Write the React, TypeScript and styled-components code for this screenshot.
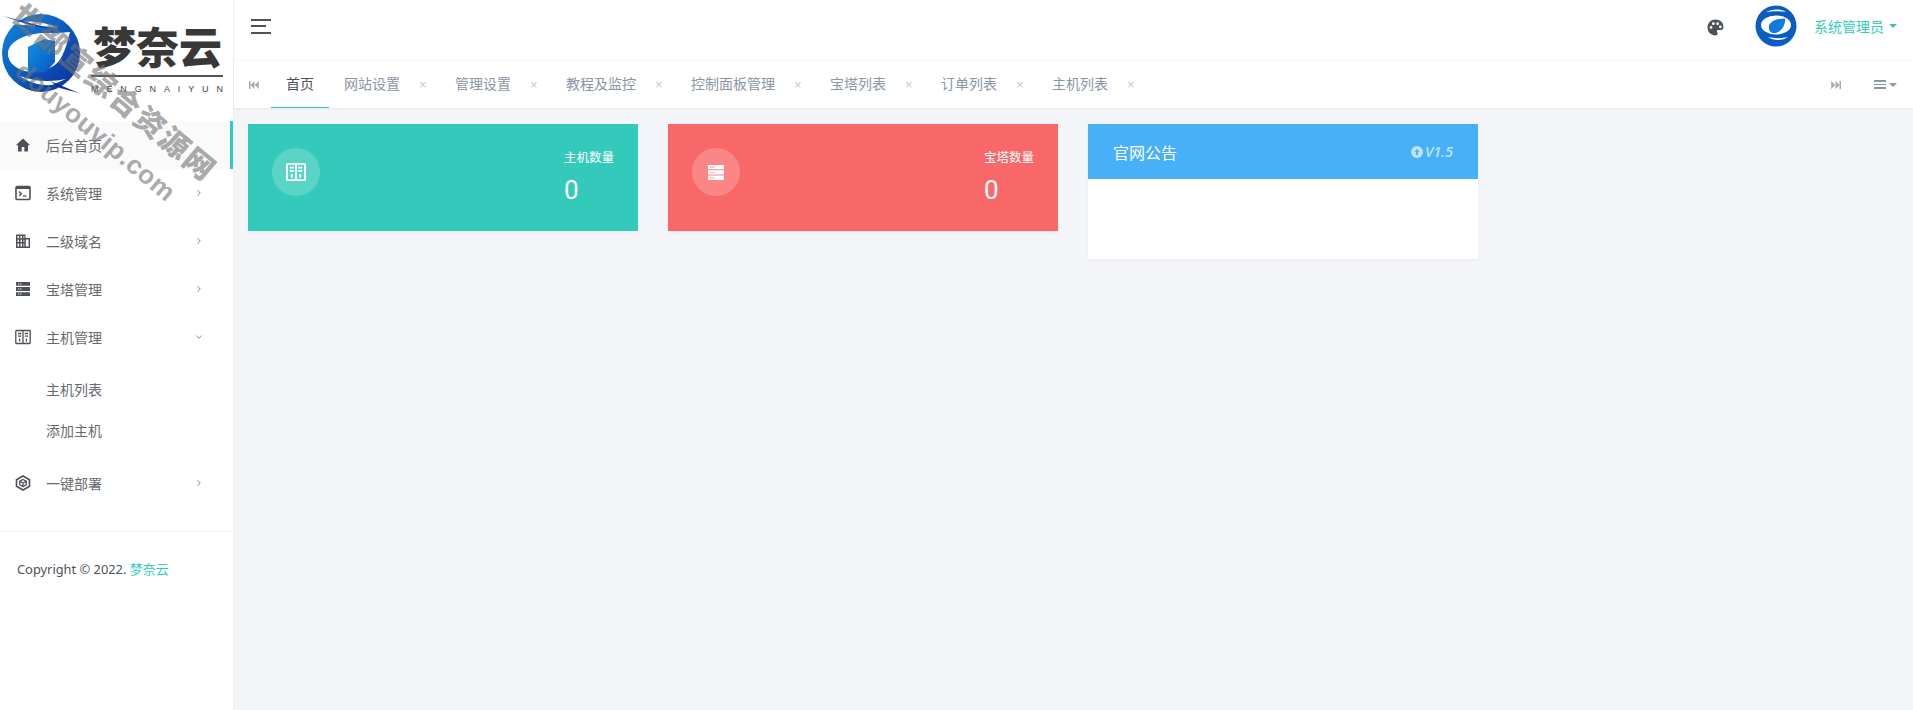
import React from "react";
import styled, { createGlobalStyle } from "styled-components";
import { ChevronRight, ChevronDown } from "lucide-react";

const Global = createGlobalStyle`
  html, body { margin: 0; padding: 0; height: 100%; background: #f3f5f9; }
  body { font-family: "Noto Sans", "Noto Sans CJK SC", sans-serif; font-size: 14px; color: #495057; overflow: hidden; }
  * { box-sizing: border-box; }
`;

const Page = styled.div`display: flex; width: 1913px; height: 710px; background: #f3f5f9;`;
const Sidebar = styled.aside`position: relative; width: 234px; flex: none; background: #fff; border-right: 1px solid #eef0f4; overflow: hidden;`;
const LogoBar = styled.div`height: 121px; display: flex; align-items: flex-start;`;
const LogoMark = styled.svg`width: 80px; height: 93px; flex: none;`;
const LogoWords = styled.div`margin: 20px 0 0 11px; width: 132px; display: flex; flex-direction: column;`;
const LogoCn = styled.div`font-family: "Noto Sans CJK SC", serif; font-weight: 900; font-size: 43px; line-height: 50px; color: #383838; white-space: nowrap; margin-left: 2px;`;
const LogoRule = styled.div`height: 2px; background: #555; margin-top: 5px;`;
const LogoEn = styled.div`font-size: 9px; font-family: "Liberation Sans", sans-serif; color: #444; line-height: 10px; margin-top: 7px; display: flex; justify-content: space-between;`;
const Menu = styled.nav`display: flex; flex-direction: column;`;
const MenuRow = styled.div<{ $active?: boolean }>`
  position: relative; height: 48px; display: flex; align-items: center; padding: 0 29px 0 15px;
  background: ${(p) => (p.$active ? "#fafafa" : "#fff")}; color: #5f6368;
  &::after { content: ""; display: ${(p) => (p.$active ? "block" : "none")}; position: absolute; right: 0; top: 0; bottom: 0; width: 3px; background: #33cabb; }
`;
const MenuIcon = styled.span`width: 16px; height: 16px; color: #4d5259; display: flex; margin-right: 15px; flex: none;`;
const MenuLabel = styled.span`flex: 1; font-size: 14px; color: #666a70;`;
const SubMenu = styled.div`padding: 8px 0 8px; display: flex; flex-direction: column;`;
const SubRow = styled.div`height: 41px; padding-left: 46px; line-height: 41px; font-size: 14px; color: #666a70;`;
const Foot = styled.div`margin-top: 24px; border-top: 1px solid #f2f3f5; padding: 27px 17px; font-size: 12.85px; color: #4d5259; line-height: 20px;`;
const FootLink = styled.a`color: #33cabb; font-size: 13px;`;
const Watermark = styled.div`
  position: absolute; left: 27px; top: -3px; transform: rotate(40deg); transform-origin: 0 0; white-space: nowrap; pointer-events: none;
  color: rgba(115,115,115,.62); font-weight: 900; line-height: 1; z-index: 3;
`;
const WmCn = styled.div`font-family: "Noto Sans CJK SC", sans-serif; font-size: 30px; letter-spacing: 2px; height: 31px;`;
const WmEn = styled.div`font-family: "Liberation Sans", sans-serif; font-size: 26px; line-height: 25px; letter-spacing: .6px; margin: 16px 0 0 39px; font-weight: 700;`;

const Main = styled.main`flex: 1; min-width: 0; display: flex; flex-direction: column;`;
const TopBar = styled.header`height: 61px; background: #fff; display: flex; align-items: center; padding: 0 16px 8px 17px; border-bottom: 1px solid #f8f8f9;`;
const Burger = styled.div`width: 20px; display: flex; flex-direction: column; gap: 4.5px;`;
const BurgerLine = styled.i<{ $w: number }>`display: block; height: 2px; width: ${(p) => p.$w}px; background: #4d5259;`;
const Spacer = styled.div`flex: 1;`;
const Palette = styled.svg`width: 17px; height: 17px; margin: 3px 31px 0 0; color: #4d5259;`;
const Avatar = styled.svg`width: 42px; height: 42px; margin: 0 17px 0 0;`;
const UserName = styled.span`color: #33cabb; font-size: 14px; display: flex; align-items: center; gap: 5px;`;
const Caret = styled.i<{ $c: string }>`display: block; width: 0; height: 0; border-left: 4px solid transparent; border-right: 4px solid transparent; border-top: 4px solid ${(p) => p.$c};`;
const TabBar = styled.div`height: 47px; background: #fff; display: flex; align-items: stretch; box-shadow: 0 1px 2px rgba(40,50,70,.07); position: relative; padding-left: 15px; color: #8b95a5;`;
const TabStep = styled.svg`width: 10px; height: 10px; align-self: center; color: #a5a9b2;`;
const Tab = styled.div<{ $active?: boolean }>`
  display: flex; align-items: center; height: 47px; font-size: 14px; line-height: 20px; white-space: nowrap;
  color: ${(p) => (p.$active ? "#4d5259" : "#8b95a5")};
  padding: 0 15px; margin-left: ${(p) => (p.$active ? "12px" : "0")}; width: ${(p) => (p.$active ? "58px" : "auto")};
  border-bottom: 1px solid ${(p) => (p.$active ? "#33cabb" : "transparent")};
`;
const TabClose = styled.b`font-weight: 400; font-size: 13px; color: #c6c8cc; font-family: "Liberation Sans", sans-serif; margin-left: 19px; line-height: 1; width: 6px;`;
const TabRight = styled.div`margin-left: auto; display: flex; align-items: center; padding-right: 16px;`;
const Hamb = styled.div`width: 12px; margin: 0 3px 0 33px; display: flex; flex-direction: column; gap: 2px;`;
const HambLine = styled.i`display: block; height: 1.4px; background: #8b95a5;`;
const Content = styled.div`display: flex; align-items: flex-start; gap: 30px; padding: 16px 14px;`;
const Stat = styled.section<{ $bg: string }>`width: 390px; height: 107px; background: ${(p) => p.$bg}; display: flex; justify-content: space-between; padding: 24px 24px 0 24px; color: #fff; box-shadow: 0 2px 3px rgba(0,0,0,.035);`;
const StatIcon = styled.div`width: 48px; height: 48px; border-radius: 50%; background: rgba(255,255,255,.2); display: flex; align-items: center; justify-content: center;`;
const StatText = styled.div`width: 50px;`;
const StatTitle = styled.div`font-size: 12.5px; line-height: 20px; white-space: nowrap;`;
const StatValue = styled.div`font-family: "Roboto", sans-serif; font-size: 26px; line-height: 30px; margin-top: 7px;`;
const Notice = styled.section`width: 390px; background: #fff; box-shadow: 0 2px 3px rgba(0,0,0,.035);`;
const NoticeHead = styled.div`height: 55px; background: #48b0f7; color: #fff; display: flex; align-items: center; justify-content: space-between; padding: 0 25px; font-size: 16px;`;
const Version = styled.span`display: flex; align-items: center; gap: 2px; font-style: italic; font-weight: 600; font-size: 14.5px; font-family: "Open Sans", sans-serif; color: rgba(255,255,255,.65);`;
const NoticeBody = styled.div`height: 80px;`;

const HomeI = () => <svg viewBox="0 0 16 16" width="16" height="16"><path fill="currentColor" d="M8 1.600 .8 8.200h2.200V14.500h3.700v-4.500h2.600v4.500H13V8.200h2.200z" /></svg>;
const TermI = () => <svg viewBox="0 0 16 16" width="16" height="16"><rect x="1" y="1.500" width="14" height="13" rx="1" fill="none" stroke="currentColor" strokeWidth="1.600" /><path d="M1 2h14v2H1z" fill="currentColor" /><path d="m4 6.500 2.500 2.200L4 11" fill="none" stroke="currentColor" strokeWidth="1.300" /><path d="M8 11h3.500" stroke="currentColor" strokeWidth="1.300" /></svg>;
const BuildI = () => <svg viewBox="0 0 16 16" width="16" height="16"><path fill="currentColor" fillRule="evenodd" d="M1 1.500h9.500v3.500H15v10H1zM2.500 3v2.300h1.500V3zm3 0v2.300H7V3zm3 0v2.300h.8V3zM2.500 6.800v2.300h1.500V6.800zm3 0v2.300H7V6.800zm3 0v2.300h.8V6.800zM10.800 6.500v7h2.800v-7zM2.500 10.600v2.800h1.500v-2.800zm3 0v2.800H7v-2.800zm3 0v2.800h.8v-2.800z" /></svg>;
const ServerI = () => <svg viewBox="0 0 16 16" width="16" height="16"><path fill="currentColor" fillRule="evenodd" d="M1 1h14v3.800H1zm0 5.100h14v3.800H1zm0 5.100h14V15H1zM3 2.400v1h1.200v-1zm2.200 0v1h1.200v-1zM3 7.500v1h1.200v-1zm2.200 0v1h1.200v-1zM3 12.600v1h1.200v-1zm2.200 0v1h1.200v-1z" /></svg>;
const HostI = ({ size = 16, w = 1.300 }: { size?: number; w?: number }) => <svg viewBox="0 0 16 16" width={size} height={size}><rect x=".8" y="1.500" width="14.400" height="13" rx=".8" fill="none" stroke="currentColor" strokeWidth={w} /><path d="M8 1.500v13M3 4.500h3.200M9.800 4.500H13M3 7.200h3.200M9.800 7.200H13M4.600 9.500v3M11.400 9.500v3" stroke="currentColor" strokeWidth={w} fill="none" /></svg>;
const CubeI = () => <svg viewBox="0 0 16 16" width="16" height="16"><g fill="none" stroke="currentColor"><path strokeWidth="1.600" d="M8 1 14.500 4.700v6.600L8 15 1.500 11.300V4.700z" /><path strokeWidth="1.300" d="M8 4.500 11.200 6.200v3.600L8 11.500 4.800 9.800V6.200zM4.800 6.200 8 8l3.200-1.800M8 8v3.500" /></g></svg>;
const StatServerI = () => <svg viewBox="0 0 16 16" width="16" height="16"><path fill="currentColor" fillRule="evenodd" d="M0 1h16v4.300H0zm0 5.300h16v4.300H0zM0 11.600h16v4.300H0zM2 2.600v1.200h1.500V2.600zm2.500 0v1.200H6V2.600zM2 7.900v1.200h1.500V7.900zm2.500 0v1.200H6V7.900zM2 13.200v1.200h1.500v-1.200zm2.500 0v1.200H6v-1.200z" /></svg>;

const tabs = ["网站设置", "管理设置", "教程及监控", "控制面板管理", "宝塔列表", "订单列表", "主机列表"];

const SideItem = ({ icon, label, open, active }: { icon: React.ReactNode; label: string; open?: boolean; active?: boolean }) => (
  <MenuRow $active={active}>
    <MenuIcon>{icon}</MenuIcon>
    <MenuLabel>{label}</MenuLabel>
    {active ? null : open ? <ChevronDown size={10} strokeWidth={1.800} color="#666" /> : <ChevronRight size={10} strokeWidth={1.800} color="#666" />}
  </MenuRow>
);

export default function App() {
  return (
    <Page>
      <Global />
      <Sidebar>
        <LogoBar>
          <LogoMark viewBox="0 0 80 93">
            <defs>
              <linearGradient id="lg" x1="0" y1="0" x2="1" y2="1"><stop offset="0" stopColor="#0e8ae0" /><stop offset="1" stopColor="#0a2a9a" /></linearGradient>
              <linearGradient id="lh" x1="0" y1="0" x2="1" y2="1"><stop offset="0" stopColor="#0f93e6" /><stop offset="1" stopColor="#0a55c0" /></linearGradient>
            </defs>
            <circle cx="41" cy="53" r="39" fill="url(#lg)" />
            <path fill="#fff" d="M8 52C10 40 28 33 46 33 54 33 62 33 70 32 68 40 66 48 62 56 58 66 44 73 30 72 16 70 7 62 8 52Z" />
            <path fill="#fff" d="M12 24C26 19 46 22 58 28 44 25 26 26 12 24Z" />
            <path fill="#fff" d="M20 76C36 82 52 82 66 79L52 85C40 86 28 82 20 76Z" />
            <path fill="url(#lh)" d="M28 47 44 39 55 41 55 62 46 72 28 73Z" />
            <path fill="#0a2a9a" d="M3 16 56 30 30 25ZM50 81 79 93 60 88Z" />
          </LogoMark>
          <LogoWords>
            <LogoCn>梦奈云</LogoCn>
            <LogoRule />
            <LogoEn>{"MENGNAIYUN".split("").map((c, i) => <span key={i}>{c}</span>)}</LogoEn>
          </LogoWords>
        </LogoBar>
        <Menu>
          <SideItem active icon={<HomeI />} label="后台首页" />
          <SideItem icon={<TermI />} label="系统管理" />
          <SideItem icon={<BuildI />} label="二级域名" />
          <SideItem icon={<ServerI />} label="宝塔管理" />
          <SideItem open icon={<HostI />} label="主机管理" />
          <SubMenu>
            <SubRow>主机列表</SubRow>
            <SubRow>添加主机</SubRow>
          </SubMenu>
          <SideItem icon={<CubeI />} label="一键部署" />
        </Menu>
        <Foot>Copyright © 2022. <FootLink>梦奈云</FootLink></Foot>
        <Watermark>
          <WmCn>世部宣综合资源网</WmCn>
          <WmEn>douyouvip.com</WmEn>
        </Watermark>
      </Sidebar>
      <Main>
        <TopBar>
          <Burger><BurgerLine $w={20} /><BurgerLine $w={15} /><BurgerLine $w={20} /></Burger>
          <Spacer />
          <Palette viewBox="0 0 16 16"><path fill="currentColor" fillRule="evenodd" d="M8 .5C3.800.5.500 3.800.500 8s3.300 7.500 7.500 7.500c1.300 0 2-.8 2-1.800 0-1-.7-1.200-.7-2 0-.8.600-1.300 1.500-1.300h1.700c1.900 0 3-1.300 3-3.200C15.500 3.200 12.200.5 8 .5ZM3.800 9.200a1.300 1.300 0 1 1 0-2.600 1.300 1.300 0 0 1 0 2.600Zm2.200-3.500a1.300 1.300 0 1 1 0-2.600 1.300 1.300 0 0 1 0 2.600Zm4 0a1.300 1.300 0 1 1 0-2.600 1.300 1.300 0 0 1 0 2.600Zm2.600 3a1.300 1.300 0 1 1 0-2.600 1.300 1.300 0 0 1 0 2.600Z" /></Palette>
          <Avatar viewBox="0 0 42 42">
            <circle cx="21" cy="21" r="20.500" fill="#0b5cc0" />
            <ellipse cx="21" cy="20" rx="15" ry="9.500" fill="#fff" />
            <path fill="#fff" d="M11 7C17 3.500 26 3.500 31 7 25 6 17 6 11 7Z" />
            <path fill="#fff" d="M13 32C19 33.500 27 33.500 33 32 28 36 18 36 13 32Z" />
            <path fill="#0f7be0" d="M14 20C17 15 24 13.500 30 13.500 30.500 20 27 26 21 28 18 28.500 14.500 27.500 14 24Z" />
          </Avatar>
          <UserName>系统管理员<Caret $c="#33cabb" /></UserName>
        </TopBar>
        <TabBar>
          <TabStep viewBox="0 0 10 10"><path fill="currentColor" d="M0 1h1.500v8H0zM5.500 1v8L1.500 5zM9.800 1v8L5.800 5z" /></TabStep>
          <Tab $active><span>首页</span></Tab>
          {tabs.map((t) => (
            <Tab key={t}><span>{t}</span><TabClose>×</TabClose></Tab>
          ))}
          <TabRight>
            <TabStep viewBox="0 0 10 10"><path fill="currentColor" d="M8.500 1H10v8H8.500zM4.500 1v8l4-4zM.2 1v8l4-4z" /></TabStep>
            <Hamb><HambLine /><HambLine /><HambLine /></Hamb>
            <Caret $c="#8b95a5" />
          </TabRight>
        </TabBar>
        <Content>
          <Stat $bg="#33cabb">
            <StatIcon><HostI size={20} w={1.500} /></StatIcon>
            <StatText><StatTitle>主机数量</StatTitle><StatValue>0</StatValue></StatText>
          </Stat>
          <Stat $bg="#f96868">
            <StatIcon><StatServerI /></StatIcon>
            <StatText><StatTitle>宝塔数量</StatTitle><StatValue>0</StatValue></StatText>
          </Stat>
          <Notice>
            <NoticeHead>
              <span>官网公告</span>
              <Version>
                <svg viewBox="0 0 12 12" width="12" height="12"><circle cx="6" cy="6" r="6" fill="currentColor" /><path d="M6 3 3.500 6H5v3h2V6h1.500z" fill="#48b0f7" /></svg>
                V1.5
              </Version>
            </NoticeHead>
            <NoticeBody />
          </Notice>
        </Content>
      </Main>
    </Page>
  );
}
